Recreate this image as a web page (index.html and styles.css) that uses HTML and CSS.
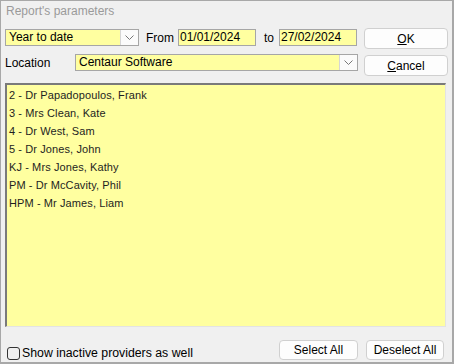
FILE: index.html
```html
<!DOCTYPE html>
<html lang="en">
<head>
    <meta charset="UTF-8">
    <title>Report's parameters</title>
    <link rel="stylesheet" href="styles.css">
</head>
<body>
    <div class="window">
        <div class="title">Report's parameters</div>

        <div class="top">
            <div class="fields">
                <div class="row">
                    <div class="combo period">
                        <span class="value">Year to date</span>
                        <span class="drop"><svg width="9" height="5" viewBox="0 0 9 5"><path d="M0.5 0.5 L4.5 4.5 L8.5 0.5" fill="none" stroke="#777" stroke-width="1"/></svg></span>
                    </div>
                    <span class="label from">From</span>
                    <div class="edit date">01/01/2024</div>
                    <span class="label to">to</span>
                    <div class="edit date">27/02/2024</div>
                </div>
                <div class="row">
                    <span class="label location">Location</span>
                    <div class="combo site">
                        <span class="value">Centaur Software</span>
                        <span class="drop"><svg width="9" height="5" viewBox="0 0 9 5"><path d="M0.5 0.5 L4.5 4.5 L8.5 0.5" fill="none" stroke="#777" stroke-width="1"/></svg></span>
                    </div>
                </div>
            </div>
            <div class="buttons">
                <button class="btn ok"><u>O</u>K</button>
                <button class="btn cancel"><u>C</u>ancel</button>
            </div>
        </div>

        <div class="list">
            <div class="item">2 - Dr Papadopoulos, Frank</div>
            <div class="item">3 - Mrs Clean, Kate</div>
            <div class="item">4 - Dr West, Sam</div>
            <div class="item">5 - Dr Jones, John</div>
            <div class="item">KJ - Mrs Jones, Kathy</div>
            <div class="item">PM - Dr McCavity, Phil</div>
            <div class="item">HPM - Mr James, Liam</div>
        </div>

        <div class="bottom">
            <label class="check"><span class="box"></span>Show inactive providers as well</label>
            <button class="btn select">Select All</button>
            <button class="btn deselect">Deselect All</button>
        </div>
    </div>
</body>
</html>
```

FILE: styles.css
```css
body {
    margin: 0;
    padding: 0;
    background: #f0f0f0;
    font-family: "Liberation Sans", Arial, sans-serif;
    font-size: 12px;
    color: #000;
}
.window {
    width: 454px;
    height: 364px;
    box-sizing: border-box;
    border: 1px solid #a8a8a8;
    border-right-width: 2px;
    border-bottom-width: 2px;
    background: #f0f0f0;
}
.title {
    height: 22px;
    line-height: 20px;
    padding-left: 5px;
    color: #9a9a9a;
}
.top {
    display: flex;
    padding: 5px 0 0 4px;
}
.fields {
    width: 353px;
    display: flex;
    flex-direction: column;
    gap: 8px;
    padding-top: 1px;
}
.row {
    display: flex;
    align-items: center;
    height: 17px;
}
.combo, .edit {
    box-sizing: border-box;
    height: 17px;
    background: #ffffa0;
    border: 1px solid #a6a6a6;
    line-height: 15px;
    padding-left: 3px;
    position: relative;
    white-space: nowrap;
}
.combo .drop {
    position: absolute;
    right: 0;
    top: 0;
    width: 17px;
    height: 15px;
    background: #fbfbfb;
    border-left: 1px solid #d6d6d6;
    display: flex;
    align-items: center;
    justify-content: center;
}
.period {
    width: 134px;
}
.site {
    width: 283px;
}
.date {
    width: 78px;
    padding-left: 1px;
}
.label {
    white-space: nowrap;
}
.from {
    margin: 0 4px 0 7px;
}
.to {
    margin: 0 5px 0 8px;
}
.location {
    width: 70px;
}
.buttons {
    display: flex;
    flex-direction: column;
    gap: 6px;
    margin-left: 6px;
}
.btn {
    font-family: "Liberation Sans", Arial, sans-serif;
    font-size: 12px;
    color: #000;
    background: #fdfdfd;
    border: 1px solid #d0d0d0;
    border-radius: 4px;
    padding: 0;
    height: 21px;
    width: 84px;
}
.list {
    box-sizing: border-box;
    margin: 7px 0 0 4px;
    width: 441px;
    height: 244px;
    background: #ffffa0;
    border: 1px solid #e3e3e3;
    border-top: 2px solid #7a7a7a;
    border-left: 2px solid #7a7a7a;
    padding-top: 1px;
}
.item {
    height: 18px;
    line-height: 19px;
    padding-left: 2px;
    font-size: 11px;
    letter-spacing: 0.1px;
    color: #1e1e1e;
}
.bottom {
    display: flex;
    align-items: center;
    margin-top: 13px;
    padding-left: 6px;
}
.check {
    display: flex;
    align-items: center;
    width: 272px;
    padding-top: 6px;
    font-size: 12.3px;
}
.box {
    width: 11px;
    height: 11px;
    border: 1px solid #333;
    border-radius: 3px;
    margin-right: 2px;
}
.select {
    width: 79px;
    height: 20px;
}
.deselect {
    width: 78px;
    height: 20px;
    margin-left: 8px;
}
```
